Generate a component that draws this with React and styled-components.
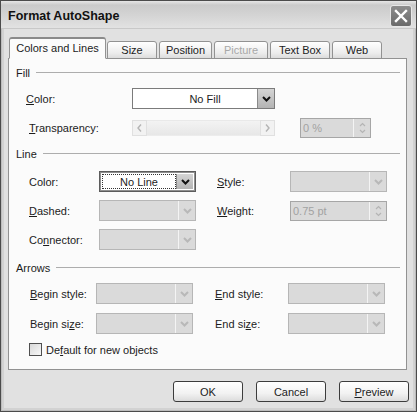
import React from 'react';
import styled, { createGlobalStyle } from 'styled-components';

const Global = createGlobalStyle`
  html, body { margin: 0; padding: 0; background: #fff; }
  body { font-family: "Liberation Sans", Arial, sans-serif; font-size: 11px; color: #1c1c1c; }
`;

const Chevron = ({ light }) => (
  <svg width="9" height="6" viewBox="0 0 9 6">
    <polyline points="1,1 4.5,4.5 8,1" fill="none" stroke={light ? '#b8b8b8' : '#111'} strokeWidth="2" />
  </svg>
);

const Arrow = ({ dir }) => (
  <svg width="5" height="8" viewBox="0 0 5 8">
    <polyline
      points={dir === 'left' ? '4,0.5 1,4 4,7.5' : '1,0.5 4,4 1,7.5'}
      fill="none"
      stroke="#b4b4b4"
      strokeWidth="1.4"
    />
  </svg>
);

const SpinArrows = () => (
  <svg width="7" height="12" viewBox="0 0 7 12">
    <polyline points="1,4 3.5,1.5 6,4" fill="none" stroke="#b4b4b4" strokeWidth="1.2" />
    <polyline points="1,8 3.5,10.5 6,8" fill="none" stroke="#b4b4b4" strokeWidth="1.2" />
  </svg>
);

const Combo = ({ value, disabled, focused }) => (
  <ComboBox disabled={disabled} focused={focused}>
    <ComboText>{focused ? <Focus>{value}</Focus> : value}</ComboText>
    <DropButton disabled={disabled}>
      <Chevron light={disabled} />
    </DropButton>
  </ComboBox>
);

const Spin = ({ value }) => (
  <SpinBox>
    <SpinText>{value}</SpinText>
    <SpinButton>
      <SpinArrows />
    </SpinButton>
  </SpinBox>
);

const App = () => (
  <>
    <Global />
    <Window>
      <TitleBar>
        <Title>Format AutoShape</Title>
        <CloseButton>
          <svg width="14" height="14" viewBox="0 0 14 14">
            <path d="M2 2 L12 12 M12 2 L2 12" stroke="#fff" strokeWidth="2.4" strokeLinecap="square" />
          </svg>
        </CloseButton>
      </TitleBar>
      <Body>
        <Tabs>
          <Tab active width={97}>Colors and Lines</Tab>
          <Tab width={50}>Size</Tab>
          <Tab width={53}>Position</Tab>
          <Tab width={54} disabled>Picture</Tab>
          <Tab width={60}>Text Box</Tab>
          <Tab width={50}>Web</Tab>
        </Tabs>
        <Panel>
          <SectionHeader>
            <span>Fill</span>
          </SectionHeader>
          <Row top={9} cols="103px 143px 25px 71px">
            <Label nudge={-3}><u>C</u>olor:</Label>
            <ComboBox>
              <ComboText center>No Fill</ComboText>
              <DropButton>
                <Chevron />
              </DropButton>
            </ComboBox>
          </Row>
          <Row top={9} cols="103px 143px 25px 71px" h={20}>
            <Label><u>T</u>ransparency:</Label>
            <Slider>
              <SliderButton><Arrow dir="left" /></SliderButton>
              <SliderTrack />
              <SliderButton><Arrow dir="right" /></SliderButton>
            </Slider>
            <span />
            <Spin value="0 %" />
          </Row>

          <SectionHeader top={9}>
            <span>Line</span>
          </SectionHeader>
          <Row top={11} cols="70px 97px 21px 73px 97px">
            <Label>Color:</Label>
            <Combo value="No Line" focused />
            <span />
            <Label><u>S</u>tyle:</Label>
            <Combo disabled />
          </Row>
          <Row top={8} cols="70px 97px 21px 73px 97px">
            <Label><u>D</u>ashed:</Label>
            <Combo disabled />
            <span />
            <Label><u>W</u>eight:</Label>
            <Spin value="0.75 pt" />
          </Row>
          <Row top={8} cols="70px 97px">
            <Label>Co<u>n</u>nector:</Label>
            <Combo disabled />
          </Row>

          <SectionHeader top={11}>
            <span>Arrows</span>
          </SectionHeader>
          <Row top={9} cols="66px 97px 22px 73px 97px" shift={1}>
            <Label><u>B</u>egin style:</Label>
            <Combo disabled />
            <span />
            <Label><u>E</u>nd style:</Label>
            <Combo disabled />
          </Row>
          <Row top={9} cols="66px 97px 22px 73px 97px" shift={1}>
            <Label>Begin si<u>z</u>e:</Label>
            <Combo disabled />
            <span />
            <Label>End si<u>z</u>e:</Label>
            <Combo disabled />
          </Row>
          <CheckRow>
            <CheckBox />
            <span>De<u>f</u>ault for new objects</span>
          </CheckRow>
        </Panel>
        <ButtonRow>
          <Button>OK</Button>
          <Button>Cancel</Button>
          <Button><u>P</u>review</Button>
        </ButtonRow>
      </Body>
    </Window>
  </>
);

export default App;

const Window = styled.div`
  width: 417px;
  height: 412px;
  box-sizing: border-box;
  border: 1px solid #4b4b4b;
  background: #dedede;
  display: flex;
  flex-direction: column;
  box-shadow: inset 0 0 0 1px #bdbdbd, inset 0 0 0 3px #d2d2d2;
`;

const TitleBar = styled.div`
  height: 27px;
  flex: none;
  display: flex;
  align-items: center;
  justify-content: space-between;
  padding: 0 4px 0 7px;
  background: linear-gradient(#e6e6e6 0%, #cacaca 15%, #d6d6d6 60%, #e2e2e2 100%);
  border-bottom: 1px solid #c8c8c8;
`;

const Title = styled.div`
  font-weight: bold;
  font-size: 12.5px;
  color: #111;
  margin-top: 3px;
`;

const CloseButton = styled.div`
  width: 20px;
  height: 20px;
  margin-top: 2px;
  border-radius: 3px;
  border: 1px solid #e8e8e8;
  background: linear-gradient(#8e8e8e, #6a6a6a);
  display: flex;
  align-items: center;
  justify-content: center;
`;

const Body = styled.div`
  flex: 1;
  display: flex;
  flex-direction: column;
  padding: 8px 6px 0 4px;
  background: #e1e1e1;
  margin: 0 3px 3px;
`;

const Tabs = styled.div`
  display: flex;
  align-items: flex-end;
  height: 22px;
  padding-left: 1px;
  position: relative;
  z-index: 1;
  margin-bottom: -1px;
`;

const Tab = styled.div`
  box-sizing: border-box;
  width: ${p => p.width}px;
  height: ${p => (p.active ? 22 : 18)}px;
  margin-right: ${p => (p.active ? 1 : 2)}px;
  border: 1px solid #929292;
  border-bottom: ${p => (p.active ? '1px solid #fbfbfb' : '1px solid #929292')};
  border-top: ${p => (p.active ? '2px solid #8a8a8a' : '1px solid #929292')};
  border-radius: 3px 3px 0 0;
  background: ${p => (p.active ? '#fbfbfb' : 'linear-gradient(#ffffff, #ececec 70%, #dcdcdc)')};
  color: ${p => (p.disabled ? '#a8a8a8' : '#1c1c1c')};
  display: flex;
  align-items: center;
  justify-content: center;
  padding-bottom: ${p => (p.active ? 2 : 0)}px;
  white-space: nowrap;
`;

const Panel = styled.div`
  box-sizing: border-box;
  height: 312px;
  border: 1px solid #929292;
  background: #fbfbfb;
  padding: 7px 6px 0 7px;
  display: flex;
  flex-direction: column;
`;

const SectionHeader = styled.div`
  display: flex;
  align-items: center;
  height: 13px;
  margin-top: ${p => p.top || 0}px;
  &::after {
    content: '';
    flex: 1;
    height: 1px;
    background: #adadad;
    margin-left: 6px;
  }
`;

const Row = styled.div`
  display: grid;
  grid-template-columns: ${p => p.cols};
  align-items: center;
  height: ${p => p.h || 21}px;
  margin-top: ${p => p.top}px;
  padding-left: ${p => 13 + (p.shift || 0)}px;
`;

const Label = styled.span`
  white-space: nowrap;
  margin-left: ${p => p.nudge || 0}px;
`;

const ComboBox = styled.div`
  box-sizing: border-box;
  height: 21px;
  width: 100%;
  display: flex;
  border: 1px solid ${p => (p.focused ? '#5c5c5c' : p.disabled ? '#b6b6b6' : '#7b7b7b')};
  box-shadow: ${p => (p.focused ? 'inset 0 0 0 1px #8f8f8f' : 'none')};
  background: ${p => (p.disabled ? '#dadada' : '#fff')};
  padding: ${p => (p.focused ? '2px' : '0')};
`;

const ComboText = styled.div`
  flex: 1;
  display: flex;
  align-items: center;
  justify-content: center;
  padding-left: ${p => (p.center ? 20 : 0)}px;
`;

const Focus = styled.div`
  box-sizing: border-box;
  width: 100%;
  height: 100%;
  border: 1px dotted #333;
  display: flex;
  align-items: center;
  justify-content: center;
`;

const DropButton = styled.div`
  width: 16px;
  display: flex;
  align-items: center;
  justify-content: center;
  background: ${p => (p.disabled ? '#dadada' : 'linear-gradient(#d4d4d4, #b4b4b4)')};
  border-left: 1px solid ${p => (p.disabled ? '#f4f4f4' : '#8a8a8a')};
`;

const Slider = styled.div`
  display: flex;
  height: 16px;
  box-sizing: border-box;
  background: linear-gradient(#f4f4f4, #e6e6e6);
`;

const SliderButton = styled.div`
  width: 15px;
  height: 16px;
  box-sizing: border-box;
  border: 1px solid #e0e0e0;
  background: #f2f2f2;
  display: flex;
  align-items: center;
  justify-content: center;
`;

const SliderTrack = styled.div`
  flex: 1;
  border-top: 1px solid #e9e9e9;
  border-bottom: 1px solid #ececec;
`;

const SpinBox = styled.div`
  box-sizing: border-box;
  height: 20px;
  display: flex;
  border: 1px solid #a6a6a6;
  background: #dadada;
`;

const SpinText = styled.div`
  flex: 1;
  display: flex;
  align-items: center;
  padding-left: 2px;
  color: #a2a2a2;
`;

const SpinButton = styled.div`
  width: 16px;
  display: flex;
  align-items: center;
  justify-content: center;
  border-left: 1px solid #f4f4f4;
`;

const CheckRow = styled.div`
  display: flex;
  align-items: center;
  height: 13px;
  margin-top: 9px;
  padding-left: 13px;
  gap: 4px;
`;

const CheckBox = styled.div`
  box-sizing: border-box;
  width: 13px;
  height: 13px;
  border: 1px solid #4f4f4f;
  background: linear-gradient(135deg, #d8d8d8, #f8f8f8);
`;

const ButtonRow = styled.div`
  display: flex;
  justify-content: flex-end;
  gap: 13px;
  margin: 11px -2px 0 0;
`;

const Button = styled.div`
  box-sizing: border-box;
  width: 70px;
  height: 21px;
  border: 1px solid #3c3c3c;
  border-radius: 3px;
  background: linear-gradient(#ffffff, #f2f2f2 60%, #dcdcdc);
  display: flex;
  align-items: center;
  justify-content: center;
`;
